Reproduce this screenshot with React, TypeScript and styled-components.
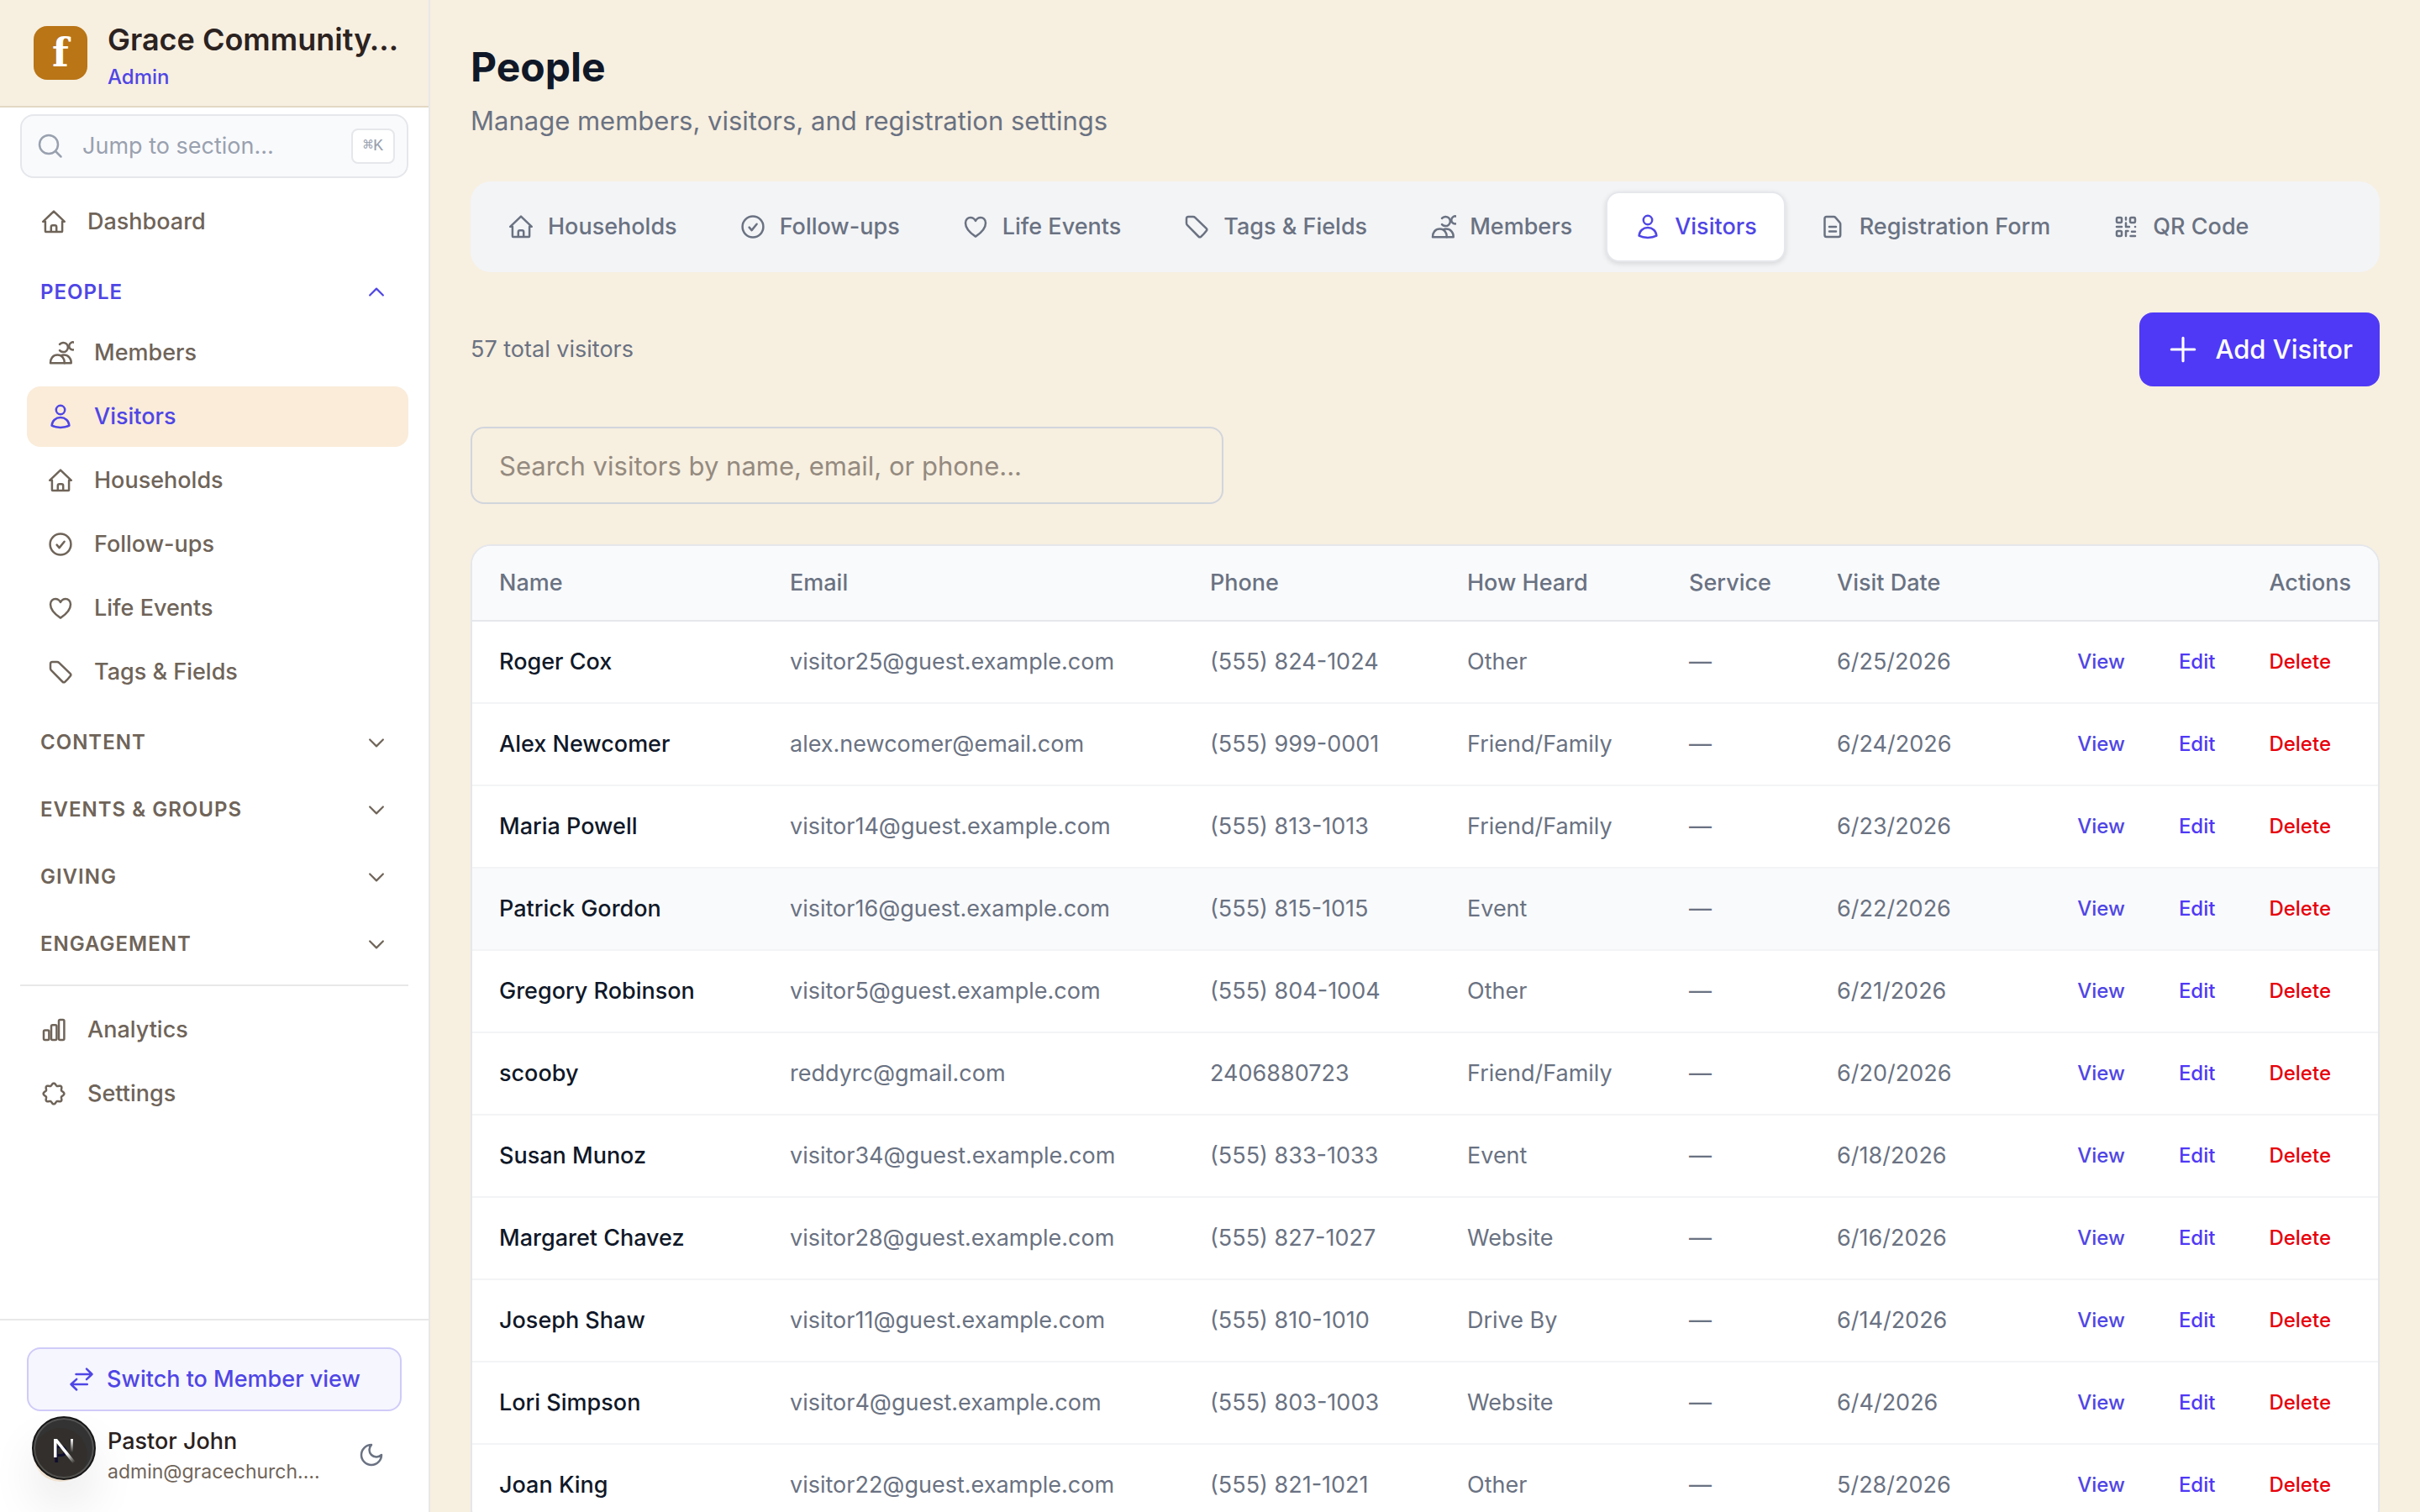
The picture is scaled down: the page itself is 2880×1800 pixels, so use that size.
import type { ReactNode } from "react";
import styled, { createGlobalStyle, css } from "styled-components";

const GlobalStyle = createGlobalStyle`
  :root {
    --cream: #f7efe0;
    --cream-border: #e3d8c4;
    --active-bg: #faecd9;
    --primary: #4f46e5;
    --button: #4f39f6;
    --danger: #e7000b;
    --brown: #6f6459;
    --brown-dark: #2b2220;
    --gray: #6a7282;
    --gray-light: #99a1af;
    --ink: #101828;
    --line: #e5e7eb;
    --line-soft: #f3f4f6;
    --line-side: #e8e8e8;
    --surface: #f9fafc;
  }

  * {
    box-sizing: border-box;
  }

  body {
    margin: 0;
    background-color: var(--cream);
    font-family: Inter, "Liberation Sans", sans-serif;
    font-size: 27px;
    line-height: 40px;
  }

  h1, p, ul {
    margin: 0;
    padding: 0;
  }

  ul {
    list-style: none;
  }

  a {
    color: inherit;
    text-decoration: none;
  }

  button, input {
    font: inherit;
  }

  button {
    cursor: pointer;
  }
`;

const Svg = styled.svg<{ $size?: number }>`
  width: ${(p) => p.$size ?? 32}px;
  height: ${(p) => p.$size ?? 32}px;
  flex-shrink: 0;
  fill: none;
  stroke: currentColor;
  stroke-width: 2.5;
  stroke-linecap: round;
  stroke-linejoin: round;
`;

// eight soft lobes around a circle
const gearPath = () => {
  const points: string[] = [];
  for (let i = 0; i < 96; i++) {
    const t = (i / 96) * Math.PI * 2;
    const r = 11.1 + 1.3 * Math.cos(8 * t);
    points.push(`${(16 + r * Math.cos(t)).toFixed(2)} ${(16 + r * Math.sin(t)).toFixed(2)}`);
  }
  return `M${points.join("L")}Z`;
};

const icons: Record<string, ReactNode> = {
  home: (
    <>
      <path d="M16 3.6 3.2 15.8h2.7v11.4c0 .4.3.7.7.7h18.8c.4 0 .7-.3.7-.7V15.8h2.7z" />
      <path d="M12.8 27.6v-5.4c0-1.1.8-1.9 1.9-1.9h2.6c1.1 0 1.9.8 1.9 1.9v5.4" />
    </>
  ),
  members: (
    <>
      <path d="M4 28.3c-.3-5.5 3.2-9.8 8.400-9.8s8.700 4.300 8.400 9.800z" />
      <path d="M16.600 19.400c1-.6 2.100-.9 3.400-.9 5.200 0 9 4.300 8.700 9.800h-7.900" />
      <path d="M15 5.900a5.600 5.600 0 1 1 0 7.200" />
      <path d="M33 4a4.500 4.500 0 1 0 0 7.800" />
    </>
  ),
  user: (
    <>
      <circle cx="16" cy="8" r="5.200" />
      <path d="M5.600 26.600C6 21 10.300 17.100 16 17.100S26 21 26.400 26.600C23.500 28.200 20 28.900 16 28.900S8.500 28.200 5.600 26.600z" />
    </>
  ),
  check: (
    <>
      <circle cx="16" cy="16" r="12.400" />
      <path d="m11.600 16.600 3 3.500 6-7.300" />
    </>
  ),
  heart: (
    <path d="M16 27.600C10.500 24 4 18.500 4 11.500 4 7.300 7 5 9.900 5c2.900 0 4.900 1.600 6.100 4 1.200-2.400 3.200-4 6.100-4C25 5 28 7.300 28 11.500c0 7-6.500 12.500-12 16.100z" />
  ),
  tag: (
    <path d="M6.300 4h5.500c1 0 1.900.4 2.600 1.100l13.200 12.700c.9.900.9 2 .1 3-2 2.700-3.900 4.800-6.400 6.900-1 .8-2.100.7-3-.2L5.100 14.200C4.400 13.500 4 12.700 4 11.700V6.300C4 5 5 4 6.300 4z" />
  ),
  form: (
    <>
      <path d="M8.800 4h8.500c.8 0 1.500.3 2 .9l5.200 5.900c.5.500.7 1.100.7 1.800v13.200c0 1.300-1 2.300-2.300 2.300H8.800c-1.300 0-2.300-1-2.300-2.300V6.300C6.500 5 7.500 4 8.800 4z" />
      <path d="M12 16h8M12 21.500h8" />
    </>
  ),
  qr: (
    <>
      <rect x="5" y="5" width="6" height="6" rx="1.500" />
      <rect x="21" y="5" width="6" height="6" rx="1.500" />
      <rect x="5" y="21" width="6" height="6" rx="1.500" />
      <path d="M16 5v2.500M5 16h6M16 11.500V16h4M27 16h.1M16 27v-6h2.500M23 21.800h4M21.500 27H27" />
    </>
  ),
  chart: (
    <>
      <rect x="4" y="16.400" width="6.400" height="11.600" rx="1.500" />
      <rect x="13" y="10.200" width="6.400" height="17.800" rx="1.500" />
      <rect x="22" y="4.100" width="6.400" height="23.900" rx="1.500" />
    </>
  ),
  gear: <path d={gearPath()} />,
  search: (
    <>
      <circle cx="14" cy="14" r="11" />
      <path d="m22 22 6.500 6.500" />
    </>
  ),
  swap: (
    <path d="M9.500 10h19M22 3.600l6.500 6.400-6.500 6.200M22.800 22H3.500M10.200 15.800 3.500 22l6.700 6.500" />
  ),
  moon: <path d="M16 4a8 8 0 0 0 12 12A12 12 0 1 1 16 4z" />,
  plus: <path d="M16 5v22M5 16h22" />,
  up: <path d="m7 20 9-9 9 9" />,
  down: <path d="m7 12 9 9 9-9" />,
};

function Icon({ name, size }: { name: string; size?: number }) {
  return (
    <Svg viewBox="0 0 32 32" $size={size} aria-hidden="true">
      {icons[name]}
    </Svg>
  );
}

const Layout = styled.div`
  display: flex;
  height: 100vh;
`;

const Sidebar = styled.aside`
  width: 512px;
  flex-shrink: 0;
  display: flex;
  flex-direction: column;
  background-color: #ffffff;
  border-right: 2px solid var(--line-side);
`;

const Brand = styled.div`
  height: 128px;
  padding: 0 40px;
  display: flex;
  align-items: center;
  gap: 24px;
  background-color: var(--cream);
  border-bottom: 2px solid var(--cream-border);
`;

const Logo = styled.div`
  width: 64px;
  height: 64px;
  flex-shrink: 0;
  border-radius: 16px;
  background-color: #b97516;
  color: #ffffff;
  font-family: "DejaVu Serif", serif;
  font-size: 46px;
  font-weight: 700;
  line-height: 64px;
  text-align: center;
`;

const BrandText = styled.div`
  padding-top: 6px;
`;

const BrandName = styled.p`
  font-size: 36px;
  line-height: 48px;
  font-weight: 600;
  color: var(--brown-dark);
  white-space: nowrap;
`;

const BrandRole = styled.p`
  margin-top: 4px;
  font-size: 24px;
  line-height: 34px;
  font-weight: 500;
  color: var(--primary);
`;

const JumpButton = styled.button`
  margin: 8px 24px 0;
  height: 76px;
  padding: 0 14px 0 18px;
  display: flex;
  align-items: center;
  gap: 22px;
  border: 2px solid var(--line);
  border-radius: 16px;
  background-color: var(--surface);
  color: var(--gray-light);

  & span {
    flex: 1;
    text-align: left;
  }
`;

const Kbd = styled.kbd`
  padding: 0 12px;
  height: 42px;
  border: 2px solid var(--line);
  border-radius: 8px;
  background-color: #ffffff;
  font-family: "Liberation Mono", "DejaVu Sans Mono", monospace;
  font-size: 20px;
  line-height: 38px;
`;

const Nav = styled.nav`
  flex: 1;
  padding: 16px 24px;
  display: flex;
  flex-direction: column;
  gap: 8px;
`;

const NavList = styled.ul<{ $nested?: boolean }>`
  display: flex;
  flex-direction: column;
  gap: 4px;
  padding-bottom: 4px;
  padding-left: ${(p) => (p.$nested ? 8 : 0)}px;
`;

const NavLink = styled.a<{ $active?: boolean }>`
  height: 72px;
  padding: 0 24px;
  display: flex;
  align-items: center;
  gap: 24px;
  border-radius: 16px;
  font-weight: 500;
  color: ${(p) => (p.$active ? "var(--primary)" : "var(--brown)")};
  background-color: ${(p) => (p.$active ? "var(--active-bg)" : "transparent")};
`;

const GroupButton = styled.button<{ $open?: boolean }>`
  width: 100%;
  height: 72px;
  padding: 0 24px;
  display: flex;
  align-items: center;
  justify-content: space-between;
  border: none;
  background: none;
  font-size: 24px;
  font-weight: 600;
  letter-spacing: 1px;
  text-transform: uppercase;
  color: ${(p) => (p.$open ? "var(--primary)" : "var(--brown)")};
`;

const Divided = styled.div`
  margin-top: 4px;
  padding-top: 16px;
  border-top: 2px solid var(--line-side);
`;

const SidebarFooter = styled.div`
  padding: 32px;
  display: flex;
  flex-direction: column;
  gap: 16px;
  border-top: 2px solid var(--line-side);
`;

const SwitchButton = styled.button`
  height: 76px;
  display: flex;
  align-items: center;
  justify-content: center;
  gap: 14px;
  border: 2px solid #cfcbf8;
  border-radius: 16px;
  background-color: #f6f6ff;
  color: var(--primary);
  font-weight: 500;
`;

const Account = styled.div`
  height: 72px;
  padding: 0 8px;
  display: flex;
  align-items: center;
  gap: 24px;

  & .text {
    flex: 1;
  }

  & .name {
    font-weight: 500;
    color: var(--brown-dark);
  }

  & .email {
    font-size: 23px;
    line-height: 32px;
    color: var(--brown);
  }
`;

const Avatar = styled.div`
  width: 64px;
  height: 64px;
  border-radius: 50%;
  background-color: var(--active-bg);
  color: var(--primary);
  font-weight: 600;
  line-height: 64px;
  text-align: center;
`;

const ThemeButton = styled.button`
  width: 56px;
  height: 56px;
  padding: 0;
  display: flex;
  align-items: center;
  justify-content: center;
  border: none;
  background: none;
  color: var(--gray);
`;

const DevBadge = styled.button`
  position: fixed;
  left: 38px;
  bottom: 38px;
  width: 76px;
  height: 76px;
  padding: 0;
  border: 2px solid #171717;
  border-radius: 50%;
  background-color: rgba(0, 0, 0, 0.8);
  box-shadow:
    inset 0 0 0 2px rgba(255, 255, 255, 0.16),
    0 32px 64px -16px rgba(0, 0, 0, 0.24);

  & svg {
    display: block;
    width: 72px;
    height: 72px;
  }
`;

const Main = styled.main`
  flex: 1;
  min-width: 0;
  padding: 48px;
  overflow-y: auto;
  scrollbar-width: none;
`;

const Title = styled.h1`
  font-size: 48px;
  line-height: 64px;
  font-weight: 700;
  color: var(--ink);
`;

const Subtitle = styled.p`
  margin-top: 8px;
  font-size: 31px;
  line-height: 48px;
  color: var(--gray);
`;

const Tabs = styled.nav`
  margin-top: 48px;
  padding: 12px 10px;
  display: flex;
  gap: 6px;
  border-radius: 24px;
  background-color: var(--line-soft);
`;

const Tab = styled.a<{ $active?: boolean }>`
  height: 84px;
  padding: 0 32px;
  display: flex;
  align-items: center;
  gap: 16px;
  border: 2px solid transparent;
  border-radius: 16px;
  font-weight: 500;
  color: var(--gray);

  ${(p) =>
    p.$active &&
    css`
      color: var(--primary);
      background-color: #ffffff;
      border-color: var(--line);
      box-shadow: 0 2px 6px rgba(0, 0, 0, 0.12);
    `}
`;

const Toolbar = styled.div`
  margin-top: 48px;
  display: flex;
  align-items: center;
  justify-content: space-between;
  color: var(--gray);
`;

const AddButton = styled.button`
  height: 88px;
  padding: 0 32px;
  display: flex;
  align-items: center;
  gap: 18px;
  border: none;
  border-radius: 16px;
  background-color: var(--button);
  color: #ffffff;
  font-size: 31px;
  font-weight: 500;
`;

const SearchInput = styled.input`
  display: block;
  width: 100%;
  max-width: 896px;
  height: 92px;
  margin-top: 48px;
  padding: 0 32px;
  border: 2px solid #d1d5dc;
  border-radius: 16px;
  background: none;
  font-size: 31px;
  color: var(--brown-dark);

  &::placeholder {
    color: #948a7f;
    opacity: 1;
  }
`;

const Card = styled.div`
  margin-top: 48px;
  border: 2px solid var(--line);
  border-radius: 24px;
  background-color: #ffffff;
  overflow: hidden;
`;

const Table = styled.table`
  width: 100%;
  table-layout: fixed;
  border-collapse: separate;
  border-spacing: 0;
  color: var(--gray);
  text-align: left;

  & th {
    height: 90px;
    padding: 0 32px;
    border-bottom: 2px solid var(--line);
    background-color: var(--surface);
    font-weight: 500;
  }

  & td {
    height: 98px;
    padding: 0 32px;
    border-bottom: 2px solid var(--line-soft);
    white-space: nowrap;
  }

  & .name {
    color: var(--ink);
    font-weight: 500;
  }

  & th:last-child {
    text-align: right;
  }
`;

const Col = styled.col<{ $width?: number }>`
  width: ${(p) => (p.$width ? `${p.$width}px` : "auto")};
`;

const Row = styled.tr<{ $hovered?: boolean }>`
  background-color: ${(p) => (p.$hovered ? "var(--surface)" : "transparent")};
`;

const Actions = styled.div`
  display: flex;
  justify-content: flex-end;
  gap: 16px;
`;

const ActionButton = styled.button<{ $tone: string }>`
  padding: 8px 24px;
  border: none;
  background: none;
  font-size: 24px;
  line-height: 32px;
  font-weight: 500;
  color: ${(p) => p.$tone};
`;

const peopleLinks = [
  { icon: "members", label: "Members" },
  { icon: "user", label: "Visitors" },
  { icon: "home", label: "Households" },
  { icon: "check", label: "Follow-ups" },
  { icon: "heart", label: "Life Events" },
  { icon: "tag", label: "Tags & Fields" },
];

const groups = ["Content", "Events & Groups", "Giving", "Engagement"];

const tabs = [
  { icon: "home", label: "Households" },
  { icon: "check", label: "Follow-ups" },
  { icon: "heart", label: "Life Events" },
  { icon: "tag", label: "Tags & Fields" },
  { icon: "members", label: "Members" },
  { icon: "user", label: "Visitors" },
  { icon: "form", label: "Registration Form" },
  { icon: "qr", label: "QR Code" },
];

const visitors = [
  ["Roger Cox", "visitor25@guest.example.com", "(555) 824-1024", "Other", "6/25/2026"],
  ["Alex Newcomer", "alex.newcomer@email.com", "(555) 999-0001", "Friend/Family", "6/24/2026"],
  ["Maria Powell", "visitor14@guest.example.com", "(555) 813-1013", "Friend/Family", "6/23/2026"],
  ["Patrick Gordon", "visitor16@guest.example.com", "(555) 815-1015", "Event", "6/22/2026"],
  ["Gregory Robinson", "visitor5@guest.example.com", "(555) 804-1004", "Other", "6/21/2026"],
  ["scooby", "reddyrc@gmail.com", "2406880723", "Friend/Family", "6/20/2026"],
  ["Susan Munoz", "visitor34@guest.example.com", "(555) 833-1033", "Event", "6/18/2026"],
  ["Margaret Chavez", "visitor28@guest.example.com", "(555) 827-1027", "Website", "6/16/2026"],
  ["Joseph Shaw", "visitor11@guest.example.com", "(555) 810-1010", "Drive By", "6/14/2026"],
  ["Lori Simpson", "visitor4@guest.example.com", "(555) 803-1003", "Website", "6/4/2026"],
  ["Joan King", "visitor22@guest.example.com", "(555) 821-1021", "Other", "5/28/2026"],
];

function SidebarPanel() {
  return (
    <Sidebar>
      <Brand>
        <Logo>f</Logo>
        <BrandText>
          <BrandName>Grace Community…</BrandName>
          <BrandRole>Admin</BrandRole>
        </BrandText>
      </Brand>
      <JumpButton type="button">
        <Icon name="search" />
        <span>Jump to section…</span>
        <Kbd>⌘K</Kbd>
      </JumpButton>
      <Nav aria-label="Sections">
        <NavList>
          <li>
            <NavLink href="#dashboard">
              <Icon name="home" />
              Dashboard
            </NavLink>
          </li>
        </NavList>
        <div>
          <GroupButton type="button" $open aria-expanded="true">
            People
            <Icon name="up" size={28} />
          </GroupButton>
          <NavList $nested>
            {peopleLinks.map((link) => (
              <li key={link.label}>
                <NavLink href="#people" $active={link.label === "Visitors"}>
                  <Icon name={link.icon} />
                  {link.label}
                </NavLink>
              </li>
            ))}
          </NavList>
        </div>
        {groups.map((group) => (
          <GroupButton key={group} type="button" aria-expanded="false">
            {group}
            <Icon name="down" size={28} />
          </GroupButton>
        ))}
        <Divided>
          <NavList>
            <li>
              <NavLink href="#analytics">
                <Icon name="chart" />
                Analytics
              </NavLink>
            </li>
            <li>
              <NavLink href="#settings">
                <Icon name="gear" />
                Settings
              </NavLink>
            </li>
          </NavList>
        </Divided>
      </Nav>
      <SidebarFooter>
        <SwitchButton type="button">
          <Icon name="swap" />
          Switch to Member view
        </SwitchButton>
        <Account>
          <Avatar>P</Avatar>
          <div className="text">
            <p className="name">Pastor John</p>
            <p className="email">admin@gracechurch.…</p>
          </div>
          <ThemeButton type="button" aria-label="Toggle theme">
            <Icon name="moon" />
          </ThemeButton>
        </Account>
      </SidebarFooter>
    </Sidebar>
  );
}

function VisitorTable() {
  return (
    <Card>
      <Table>
        <colgroup>
          <Col $width={346} />
          <Col $width={500} />
          <Col $width={306} />
          <Col $width={264} />
          <Col $width={176} />
          <Col $width={240} />
          <Col />
        </colgroup>
        <thead>
          <tr>
            <th>Name</th>
            <th>Email</th>
            <th>Phone</th>
            <th>How Heard</th>
            <th>Service</th>
            <th>Visit Date</th>
            <th>Actions</th>
          </tr>
        </thead>
        <tbody>
          {visitors.map(([name, email, phone, heard, date]) => (
            <Row key={email} $hovered={name === "Patrick Gordon"}>
              <td className="name">{name}</td>
              <td>{email}</td>
              <td>{phone}</td>
              <td>{heard}</td>
              <td>—</td>
              <td>{date}</td>
              <td>
                <Actions>
                  <ActionButton type="button" $tone="var(--primary)">
                    View
                  </ActionButton>
                  <ActionButton type="button" $tone="var(--button)">
                    Edit
                  </ActionButton>
                  <ActionButton type="button" $tone="var(--danger)">
                    Delete
                  </ActionButton>
                </Actions>
              </td>
            </Row>
          ))}
        </tbody>
      </Table>
    </Card>
  );
}

export default function App() {
  return (
    <>
      <GlobalStyle />
      <Layout>
        <SidebarPanel />
        <Main>
          <Title>People</Title>
          <Subtitle>Manage members, visitors, and registration settings</Subtitle>
          <Tabs aria-label="People">
            {tabs.map((tab) => (
              <Tab key={tab.label} href="#tab" $active={tab.label === "Visitors"}>
                <Icon name={tab.icon} />
                {tab.label}
              </Tab>
            ))}
          </Tabs>
          <Toolbar>
            <p>57 total visitors</p>
            <AddButton type="button">
              <Icon name="plus" size={40} />
              Add Visitor
            </AddButton>
          </Toolbar>
          <SearchInput
            type="text"
            aria-label="Search visitors"
            placeholder="Search visitors by name, email, or phone..."
          />
          <VisitorTable />
        </Main>
      </Layout>
      <DevBadge type="button" aria-label="Open dev tools">
        <svg viewBox="0 0 72 72" fill="none" aria-hidden="true">
          <defs>
            <linearGradient id="slant" gradientUnits="userSpaceOnUse" x1="40" y1="42" x2="49" y2="53">
              <stop stopColor="#fff" />
              <stop offset="1" stopColor="#fff" stopOpacity="0" />
            </linearGradient>
            <linearGradient id="stem" gradientUnits="userSpaceOnUse" x1="46" y1="25" x2="46" y2="41">
              <stop stopColor="#fff" />
              <stop offset="1" stopColor="#fff" stopOpacity="0" />
            </linearGradient>
          </defs>
          <path d="M24 25h4l21.500 27-3 2L27.500 30v17H24z" fill="url(#slant)" />
          <rect x="44" y="25" width="3" height="16" fill="url(#stem)" />
        </svg>
      </DevBadge>
    </>
  );
}
